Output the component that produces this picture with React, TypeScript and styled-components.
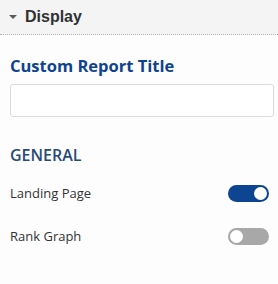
import React, { useState } from "react";
import styled, { createGlobalStyle } from "styled-components";

const GlobalStyle = createGlobalStyle`
  html, body {
    margin: 0;
    padding: 0;
    background: #ffffff;
  }
  * {
    box-sizing: border-box;
  }
`;

const Panel = styled.div`
  width: 278px;
  height: 284px;
  background: #fdfdfd;
  font-family: "Open Sans", sans-serif;
  overflow: hidden;
`;

const SectionHeader = styled.div`
  display: flex;
  align-items: center;
  gap: 8px;
  height: 35px;
  padding: 0 0 1px 9px;
  background: #f4f4f4;
  border-bottom: 1px dotted #b5b5b5;
  font-family: "Liberation Sans", Arial, sans-serif;
  font-size: 16px;
  font-weight: bold;
  color: #2f3133;
`;

const Caret = styled.span`
  width: 0;
  height: 0;
  border-left: 4px solid transparent;
  border-right: 4px solid transparent;
  border-top: 4px solid #5a5a5a;
  margin-top: 1px;
`;

const Body = styled.div`
  display: flex;
  flex-direction: column;
  padding: 19px 4px 0 10px;
`;

const Title = styled.h2`
  margin: 0;
  font-size: 16.5px;
  font-weight: 700;
  line-height: 24px;
  color: #0f4290;
`;

const TitleInput = styled.input`
  margin-top: 6px;
  width: 264px;
  height: 33px;
  border: 1px solid #dcdcdc;
  border-radius: 3px;
  background: #ffffff;
  padding: 0 8px;
  font-family: inherit;
  font-size: 13px;
  outline: none;
`;

const GroupLabel = styled.h3`
  margin: 27px 0 0;
  font-size: 16px;
  font-weight: 600;
  line-height: 22px;
  color: #274a78;
`;

const Row = styled.div`
  display: flex;
  align-items: center;
  justify-content: space-between;
  height: 20px;
  margin-top: 17px;
  padding-right: 5px;

  & + & {
    margin-top: 23px;
  }
`;

const RowLabel = styled.span`
  font-size: 13px;
  color: #333333;
`;

const Track = styled.button<{ $on: boolean }>`
  position: relative;
  width: 41px;
  height: 17px;
  border: none;
  border-radius: 9px;
  padding: 0;
  cursor: pointer;
  background: ${(p) => (p.$on ? "#0d4593" : "#a8a8a8")};

  &::after {
    content: "";
    position: absolute;
    top: 2px;
    left: ${(p) => (p.$on ? "26px" : "2px")};
    width: 13px;
    height: 13px;
    border-radius: 50%;
    background: #ffffff;
  }
`;

type ToggleRowProps = {
  label: string;
  initial: boolean;
};

const ToggleRow = ({ label, initial }: ToggleRowProps) => {
  const [on, setOn] = useState(initial);
  return (
    <Row>
      <RowLabel>{label}</RowLabel>
      <Track $on={on} onClick={() => setOn(!on)} aria-pressed={on} />
    </Row>
  );
};

const App = () => {
  return (
    <>
      <GlobalStyle />
      <Panel>
        <SectionHeader>
          <Caret />
          Display
        </SectionHeader>
        <Body>
          <Title>Custom Report Title</Title>
          <TitleInput type="text" />
          <GroupLabel>GENERAL</GroupLabel>
          <ToggleRow label="Landing Page" initial={true} />
          <ToggleRow label="Rank Graph" initial={false} />
        </Body>
      </Panel>
    </>
  );
};

export default App;
